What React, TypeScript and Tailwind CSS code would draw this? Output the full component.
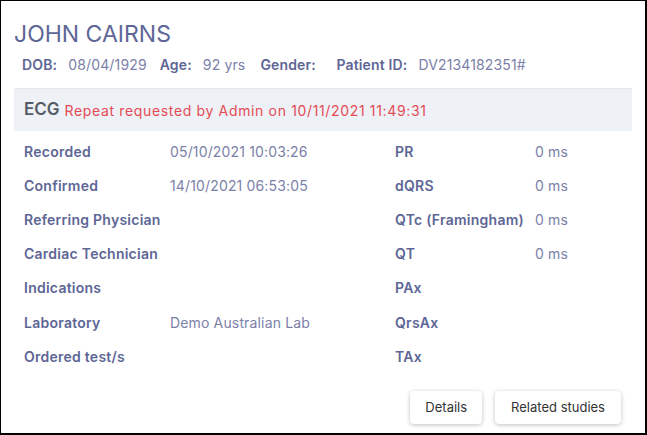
export default function App() {
  const left: [string, string][] = [
    ["Recorded", "05/10/2021 10:03:26"],
    ["Confirmed", "14/10/2021 06:53:05"],
    ["Referring Physician", ""],
    ["Cardiac Technician", ""],
    ["Indications", ""],
    ["Laboratory", "Demo Australian Lab"],
    ["Ordered test/s", ""],
  ];
  const right: [string, string][] = [
    ["PR", "0 ms"],
    ["dQRS", "0 ms"],
    ["QTc (Framingham)", "0 ms"],
    ["QT", "0 ms"],
    ["PAx", ""],
    ["QrsAx", ""],
    ["TAx", ""],
  ];
  return (
    <div
      className="w-[647px] h-[435px] bg-white border-l border-t border-r-2 border-b-2 border-black flex flex-col text-[#5e6696]"
      style={{ fontFamily: "Inter, 'Noto Sans', sans-serif" }}
    >
      <div className="px-[13px] pt-[18px]">
        <div className="text-[23px] leading-[30px] text-[#5e6696]">JOHN CAIRNS</div>
        <div className="flex items-center pl-[8px] mt-[7px] text-[14px] leading-[18px] tracking-[0.15px]">
          <span className="flex gap-[11px] mr-[13px]"><b className="font-semibold">DOB:</b><span className="text-[#7b81a8]">08/04/1929</span></span>
          <span className="flex gap-[11px] mr-[15px]"><b className="font-semibold">Age:</b><span className="text-[#7b81a8]">92 yrs</span></span>
          <span className="flex gap-[11px] w-[76px]"><b className="font-semibold">Gender:</b></span>
          <span className="flex gap-[11px]"><b className="font-semibold">Patient ID:</b><span className="text-[#7b81a8]">DV2134182351#</span></span>
        </div>
        <div className="mt-[14px] border-t border-[#e5e7eb] bg-[#eef1f5] h-[43px] flex items-center pl-[10px] gap-[5px]">
          <span className="text-[17px] font-semibold text-[#555b66]">ECG</span>
          <span className="text-[14px] tracking-[0.65px] text-[#e44b55]">Repeat requested by Admin on 10/11/2021 11:49:31</span>
        </div>
        <div className="flex pl-[10px] pt-[3px]">
          <div className="w-[371px] flex flex-col">
            {left.map(([k, v]) => (
              <div key={k} className="flex h-[34.2px] items-center text-[14px] tracking-[0.15px]">
                <span className="w-[146px] font-semibold tracking-[0.25px]">{k}</span>
                <span className="text-[#7b81a8]">{v}</span>
              </div>
            ))}
          </div>
          <div className="flex flex-col">
            {right.map(([k, v]) => (
              <div key={k} className="flex h-[34.2px] items-center text-[14px] tracking-[0.15px]">
                <span className="w-[140px] font-semibold tracking-[0.25px]">{k}</span>
                <span className="text-[#7b81a8]">{v}</span>
              </div>
            ))}
          </div>
        </div>
        <div className="flex justify-end gap-[13px] pr-[11px] mt-[18px]">
          <button className="h-[33px] px-[15px] rounded-[4px] bg-white text-[13px] text-[#333] shadow-[0_1px_4px_rgba(0,0,0,0.25)]">Details</button>
          <button className="h-[33px] px-[16px] rounded-[4px] bg-white text-[13px] text-[#333] shadow-[0_1px_4px_rgba(0,0,0,0.25)]">Related studies</button>
        </div>
      </div>
    </div>
  );
}
